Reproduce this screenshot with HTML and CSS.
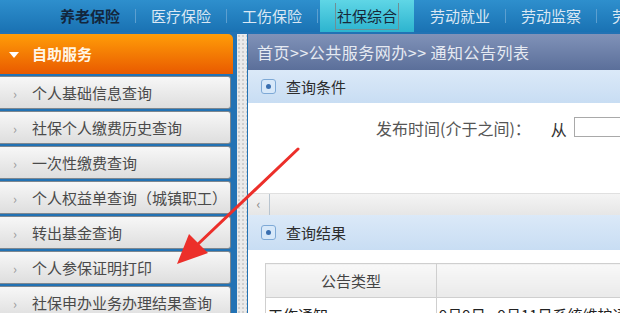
FILE: index.html
```html
<!DOCTYPE html>
<html lang="zh-CN">
<head>
    <meta charset="UTF-8">
    <title>通知公告列表</title>
    <link rel="stylesheet" href="styles.css">
</head>
<body>

    <div class="topnav">
        <a class="tab tab-first">养老保险</a><span class="sep"></span>
        <a class="tab">医疗保险</a><span class="sep"></span>
        <a class="tab">工伤保险</a><span class="sep"></span>
        <a class="tab tab-active"><span class="focus">社保综合</span></a><span class="sep sep-hidden"></span>
        <a class="tab">劳动就业</a><span class="sep"></span>
        <a class="tab">劳动监察</a><span class="sep"></span>
        <a class="tab">劳动仲裁</a>
    </div>

    <div class="layout">
        <div class="sidebar">
            <div class="side-head"><span class="caret"></span>自助服务</div>
            <ul class="side-menu">
                <li><span class="arr">›</span>个人基础信息查询</li>
                <li><span class="arr">›</span>社保个人缴费历史查询</li>
                <li><span class="arr">›</span>一次性缴费查询</li>
                <li><span class="arr">›</span>个人权益单查询（城镇职工）</li>
                <li><span class="arr">›</span>转出基金查询</li>
                <li><span class="arr">›</span>个人参保证明打印</li>
                <li><span class="arr">›</span>社保申办业务办理结果查询</li>
            </ul>
        </div>
        <div class="splitter"></div>
        <div class="main">
            <div class="crumb">首页&gt;&gt;公共服务网办&gt;&gt; 通知公告列表</div>

            <div class="panel-head"><span class="plus"></span>查询条件</div>
            <div class="query-body">
                <span class="q-label">发布时间(介于之间)：</span>
                <span class="q-from">从</span>
                <input type="text" class="q-input">
            </div>
            <div class="hscroll">
                <span class="hs-btn">‹</span>
                <span class="hs-track"></span>
            </div>

            <div class="panel-head panel-head-tall"><span class="plus"></span>查询结果</div>
            <div class="result-body">
                <table class="result-table">
                    <thead>
                        <tr>
                            <th class="col-type">公告类型</th>
                            <th>公告标题</th>
                        </tr>
                    </thead>
                    <tbody>
                        <tr>
                            <td>工作通知</td>
                            <td>9月9日 - 9月11日系统维护通知</td>
                        </tr>
                    </tbody>
                </table>
            </div>
        </div>
    </div>

    <!-- 提示箭头 -->
    <svg class="pointer" width="620" height="313" viewBox="0 0 620 313">
        <line x1="298" y1="149" x2="196" y2="246" stroke="#ec2f2a" stroke-width="3" stroke-linecap="round"/>
        <polygon points="177,264 189,234 208,253" fill="#ec2f2a"/>
    </svg>

</body>
</html>
```

FILE: styles.css
```css
body {
    margin: 0;
    width: 620px;
    height: 313px;
    overflow: hidden;
    position: relative;
    font-family: "Noto Sans CJK SC", "DejaVu Sans", sans-serif;
    font-size: 15px;
    background-color: #2272b4;
}
.topnav {
    height: 32px;
    display: flex;
    align-items: center;
    padding-left: 45px;
    background: linear-gradient(#2e8fcd, #1a72b3);
    white-space: nowrap;
}
.tab {
    height: 32px;
    line-height: 32px;
    padding: 0 15px;
    color: #dbe8f4;
    flex-shrink: 0;
}
.tab-first {
    color: #13263d;
    font-weight: bold;
}
.tab-active {
    background: linear-gradient(#5fd6e6, #2db4cf);
    color: #17283a;
    display: flex;
    align-items: center;
    margin-left: 2px;
}
.tab-active .focus {
    line-height: 26px;
    padding: 0 1px;
    border: 1px solid #6f8f95;
    border-top: none;
}
.sep {
    width: 1px;
    height: 14px;
    background-color: #5c9fd0;
    flex-shrink: 0;
}
.sep-hidden {
    background-color: transparent;
}
.layout {
    display: flex;
    height: 281px;
    padding-top: 2px;
}
.sidebar {
    width: 233px;
    flex-shrink: 0;
}
.side-head {
    height: 40px;
    line-height: 40px;
    background: linear-gradient(#ff9d08, #e95a00);
    border-radius: 0 5px 0 0;
    color: #fff6e6;
    font-weight: bold;
    padding-left: 32px;
    position: relative;
}
.caret {
    position: absolute;
    left: 9px;
    top: 18px;
    border-left: 5px solid transparent;
    border-right: 5px solid transparent;
    border-top: 6px solid #fff;
}
.side-menu {
    list-style: none;
    margin: 0;
    padding: 2px 0 0;
}
.side-menu li {
    height: 31px;
    line-height: 31px;
    margin-bottom: 2px;
    margin-right: 2px;
    border: 1px solid #7d8790;
    border-radius: 0 3px 3px 0;
    border-left: none;
    background: linear-gradient(#f7f7f7, #dedede);
    color: #4a4a4a;
    padding-left: 13px;
    white-space: nowrap;
}
.arr {
    display: inline-block;
    width: 19px;
    color: #9a9a9a;
    font-size: 13px;
}
.splitter {
    width: 10px;
    margin-left: 4px;
    flex-shrink: 0;
    background-color: #eaeaea;
    background-image: radial-gradient(#cfcfcf 1px, transparent 1.5px);
    background-size: 4px 4px;
}
.main {
    flex: 1;
    margin-left: 1px;
    background-color: #fff;
    overflow: hidden;
}
.crumb {
    height: 36px;
    line-height: 36px;
    padding-left: 9px;
    background: linear-gradient(#8092b8, #5b6f9a);
    color: #e6eaf2;
    font-size: 16px;
    letter-spacing: 0.5px;
    white-space: nowrap;
}
.panel-head {
    height: 33px;
    line-height: 33px;
    background: linear-gradient(#dbe9f8, #c8ddf3);
    color: #2c2c2c;
    display: flex;
    align-items: center;
    padding-left: 13px;
}
.panel-head-tall {
    height: 35px;
}
.plus {
    width: 13px;
    height: 13px;
    border: 1px solid #7ea9d6;
    border-radius: 3px;
    background: #d7e8f9;
    margin-right: 10px;
    position: relative;
}
.plus::after {
    content: "";
    position: absolute;
    left: 4px;
    top: 4px;
    width: 5px;
    height: 5px;
    border-radius: 50%;
    background-color: #3a6fb0;
}
.query-body {
    height: 90px;
    display: flex;
    align-items: flex-start;
    padding-top: 14px;
    box-sizing: border-box;
    padding-left: 128px;
    white-space: nowrap;
    color: #555;
    font-size: 16px;
}
.q-label {
    line-height: 22px;
}
.q-from {
    margin-left: 20px;
    line-height: 24px;
    color: #333;
}
.q-input {
    margin-left: 7px;
    width: 80px;
    height: 18px;
    border: 1px solid #a9a9a9;
    padding: 0;
}
.hscroll {
    height: 22px;
    display: flex;
    background: linear-gradient(#f4f4f4, #e6e6e6);
    border-top: 1px solid #e0e0e0;
    box-sizing: border-box;
}
.hs-btn {
    width: 21px;
    line-height: 20px;
    text-align: center;
    color: #888;
    font-size: 13px;
    border-right: 1px solid #b8c4cf;
}
.hs-track {
    flex: 1;
}
.result-body {
    padding: 13px 0 0 17px;
}
.result-table {
    border-collapse: collapse;
    width: 420px;
    color: #444;
}
.result-table th, .result-table td {
    border: 1px solid #cfcfcf;
    height: 33px;
    padding: 0 2px;
    white-space: nowrap;
}
.result-table th {
    background: linear-gradient(#f8f8f8, #eaeaea);
    font-weight: normal;
    color: transparent;
}
.result-table th.col-type {
    width: 166px;
    color: #444;
}
.result-table td {
    text-align: left;
    vertical-align: top;
    padding-top: 6px;
    color: #222;
}
.pointer {
    position: absolute;
    left: 0;
    top: 0;
    pointer-events: none;
}
```
